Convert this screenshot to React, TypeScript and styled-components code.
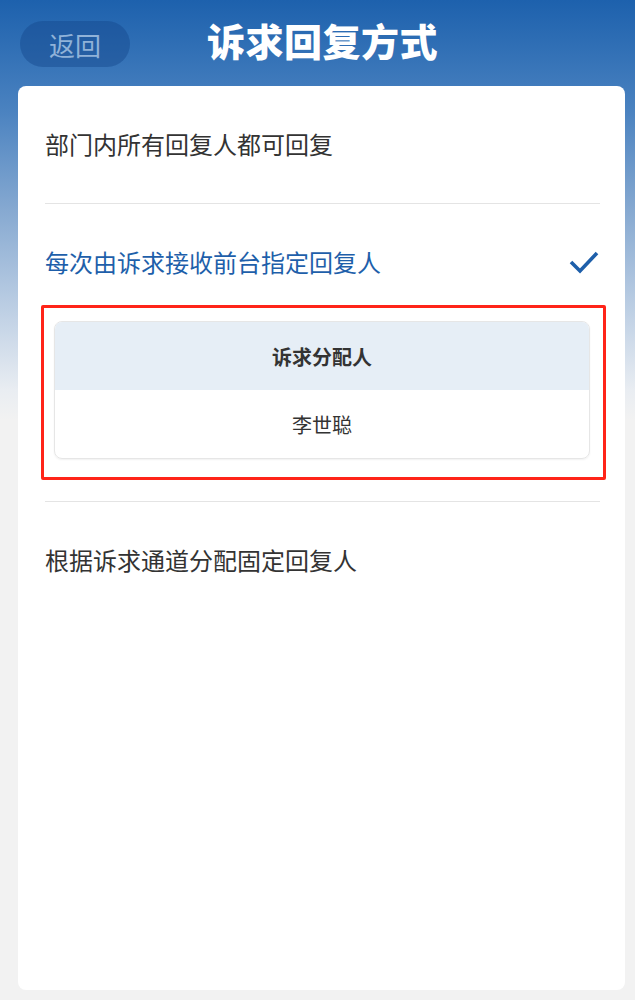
import * as React from 'react';
import styled, { createGlobalStyle } from 'styled-components';

const blue = '#1e5faa';
const text = '#333333';
const line = '#e4e4e4';

const GlobalStyle = createGlobalStyle`
    html, body {
        margin: 0;
        padding: 0;
        background: #f2f2f2;
    }
    body {
        font-family: "Noto Sans CJK SC", "Noto Sans", sans-serif;
    }
`;

interface IOption {
    label: string;
    selected?: boolean;
}

const options: IOption[] = [
    { label: '部门内所有回复人都可回复' },
    { label: '每次由诉求接收前台指定回复人', selected: true },
    { label: '根据诉求通道分配固定回复人' },
];

const Check = () => (
    <svg width="32" height="28" viewBox="0 0 32 28">
        <path d="M3 14 L12 23 L29 5" fill="none" stroke={blue} strokeWidth="3.6" strokeLinecap="butt" strokeLinejoin="miter" />
    </svg>
);

export default function App() {
    return (
        <Page>
            <GlobalStyle />
            <Header>
                <BackButton>返回</BackButton>
                <Title>诉求回复方式</Title>
            </Header>
            <Card>
                {options.map((opt, i) => (
                    <Section key={opt.label} $last={i === options.length - 1}>
                        <OptionRow $expanded={!!opt.selected}>
                            <OptionLabel $selected={!!opt.selected}>{opt.label}</OptionLabel>
                            {opt.selected && <Check />}
                        </OptionRow>
                        {opt.selected && (
                            <Highlight>
                                <Table>
                                    <TableHead>诉求分配人</TableHead>
                                    <TableCell>李世聪</TableCell>
                                </Table>
                            </Highlight>
                        )}
                    </Section>
                ))}
            </Card>
        </Page>
    );
}

const Page = styled('div')`
    min-height: 1000px;
    box-sizing: border-box;
    padding-bottom: 10px;
    background: linear-gradient(180deg, #1d61ad 0px, #4a82c0 110px, #86a9d1 210px, #c3d3e6 320px, #e9edf2 390px, #f2f2f2 420px, #f2f2f2 100%);
    display: flex;
    flex-direction: column;
`;

const Header = styled('div')`
    position: relative;
    height: 86px;
    display: flex;
    align-items: center;
    justify-content: center;
    padding-bottom: 6px;
    box-sizing: border-box;
`;

const BackButton = styled('button')`
    position: absolute;
    left: 20px;
    top: 21px;
    width: 110px;
    height: 46px;
    border: none;
    border-radius: 23px;
    background: rgba(20, 70, 140, 0.45);
    color: #90b2d8;
    font-family: "Noto Sans CJK SC", sans-serif;
    font-size: 26px;
    cursor: pointer;
    padding: 0;
`;

const Title = styled('div')`
    color: #ffffff;
    font-size: 38px;
    font-weight: 900;
    letter-spacing: 0.5px;
    line-height: 46px;
    margin-left: 10px;
`;

const Card = styled('div')`
    margin: 0 10px 0 18px;
    height: 904px;
    background: #ffffff;
    border-radius: 8px;
    padding: 0 25px 0 27px;
    box-sizing: border-box;
`;

const Section = styled('div')<{ $last: boolean }>`
    border-bottom: ${p => (p.$last ? 'none' : `1px solid ${line}`)};
    display: flex;
    flex-direction: column;
`;

const OptionRow = styled('div')<{ $expanded: boolean }>`
    display: flex;
    align-items: center;
    justify-content: space-between;
    padding: ${p => (p.$expanded ? '44px 0 29px' : '44px 0 45px')};
`;

const OptionLabel = styled('div')<{ $selected: boolean }>`
    font-size: 24px;
    line-height: 28px;
    color: ${p => (p.$selected ? blue : text)};
`;

const Highlight = styled('div')`
    margin: 0 -6px 21px -4px;
    border: 3px solid #ff2418;
    border-radius: 2px;
    padding: 13px 13px 18px 10px;
`;

const Table = styled('div')`
    border: 1px solid #e6e6e6;
    border-radius: 8px;
    overflow: hidden;
    box-shadow: 0 1px 2px rgba(0, 0, 0, 0.06);
`;

const TableHead = styled('div')`
    height: 68px;
    display: flex;
    align-items: center;
    justify-content: center;
    background: #e6eef6;
    color: ${text};
    font-size: 20px;
    font-weight: 700;
`;

const TableCell = styled('div')`
    height: 68px;
    display: flex;
    align-items: center;
    justify-content: center;
    color: ${text};
    font-size: 20px;
`;
